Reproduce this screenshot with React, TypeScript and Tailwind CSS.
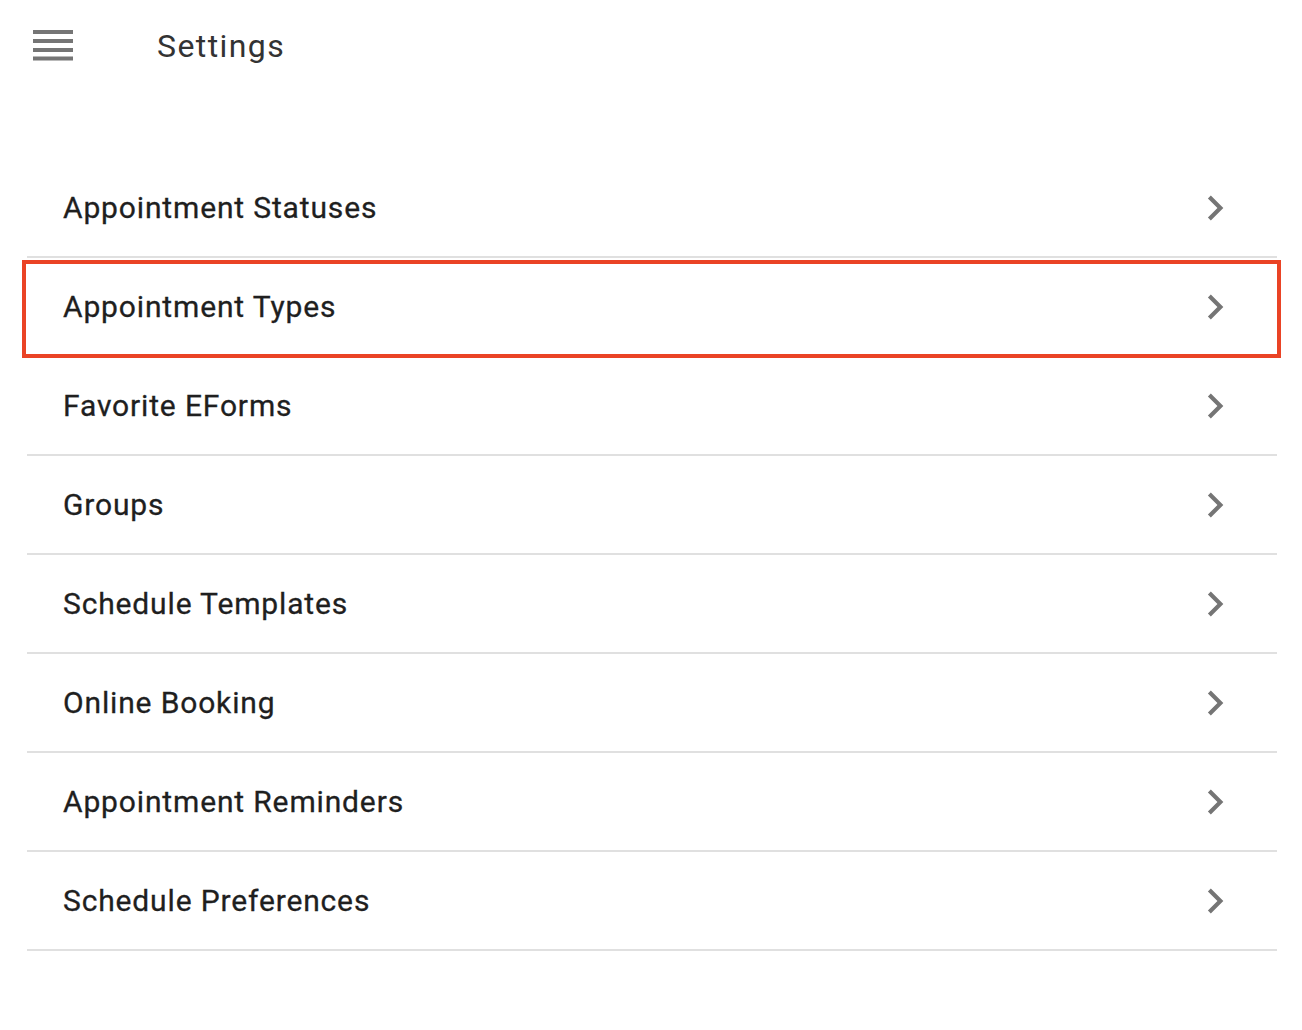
import React from 'react';

const items = [
  'Appointment Statuses',
  'Appointment Types',
  'Favorite EForms',
  'Groups',
  'Schedule Templates',
  'Online Booking',
  'Appointment Reminders',
  'Schedule Preferences',
];

const MenuIcon = () => (
  <svg width="40" height="31" viewBox="0 0 40 31" className="block">
    <rect x="0" y="0" width="40" height="4" fill="#757575" />
    <rect x="0" y="9" width="40" height="4" fill="#757575" />
    <rect x="0" y="18" width="40" height="4" fill="#757575" />
    <rect x="0" y="26.5" width="40" height="4" fill="#757575" />
  </svg>
);

const Chevron = () => (
  <svg width="50" height="50" viewBox="0 0 24 24" className="block">
    <path d="M10 6L8.59 7.41 13.17 12l-4.58 4.59L10 18l6-6z" fill="#757575" />
  </svg>
);

const App: React.FC = () => {
  return (
    <div className="min-h-screen w-full bg-white font-['Roboto',sans-serif]">
      {/* Top bar */}
      <header className="flex items-center h-[92px] pl-[33px] pb-[1px]">
        <MenuIcon />
        <h1 className="ml-[84px] text-[32px] leading-none text-[#333333] tracking-[1.4px]">Settings</h1>
      </header>

      {/* Settings list */}
      <ul className="mt-[67px] ml-[27px] mr-[25px]">
        {items.map((label) => (
          <li
            key={label}
            className="relative flex items-center justify-between h-[99px] border-b-2 border-[#e0e0e0] pl-[36px] pr-[37px]"
          >
            <span className="text-[30px] font-normal text-[#1f1f1f] tracking-[0.85px] [-webkit-text-stroke:0.3px_#1f1f1f]">{label}</span>
            <Chevron />
            {label === 'Appointment Types' && (
              <span className="absolute left-[-5px] right-[-4px] top-[2px] bottom-[-3px] border-[4px] border-[#ea4325] pointer-events-none" />
            )}
          </li>
        ))}
      </ul>
    </div>
  );
};

export default App;
